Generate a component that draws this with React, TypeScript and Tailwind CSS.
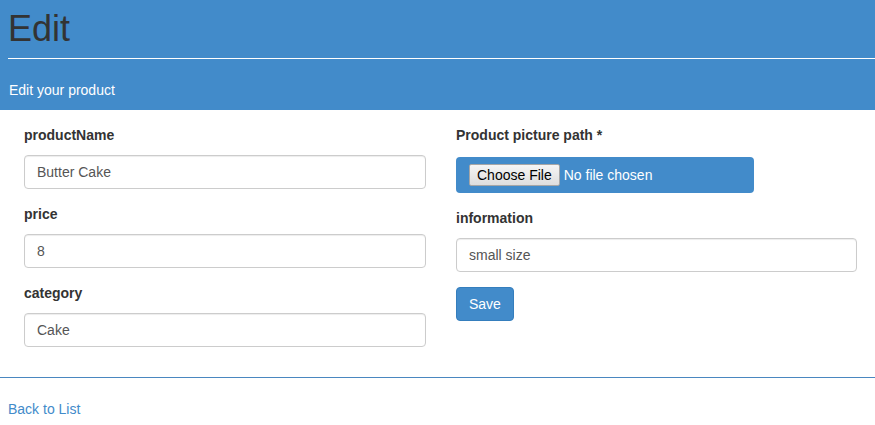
import React from "react";

const font = { fontFamily: '"Liberation Sans", Arial, sans-serif' };

function Field({ label, value, last }: { label: string; value: string; last?: boolean }) {
  return (
    <div className={last ? "" : "mb-[15px]"}>
      <div className="text-[14px] leading-[20px] font-bold text-[#333] mb-[10px]">{label}</div>
      <div className="h-[34px] border border-[#ccc] rounded-[4px] shadow-[inset_0_1px_1px_rgba(0,0,0,0.075)] px-[12px] flex items-center text-[14px] text-[#555] bg-white">
        {value}
      </div>
    </div>
  );
}

export default function App() {
  return (
    <div className="w-[875px] h-[425px] bg-white overflow-hidden" style={font}>
      <div className="bg-[#428bca] h-[110px]">
        <div className="pl-[8px]">
          <h1 className="text-[36px] leading-[40px] pt-[9px] pb-[9px] text-[#333] font-normal">Edit</h1>
          <div className="h-px bg-white" />
        </div>
        <div className="pl-[9px] pt-[21px] text-[14px] leading-[20px] text-white">Edit your product</div>
      </div>

      <div className="grid grid-cols-[402px_401px] gap-x-[30px] pl-[24px] pt-[15px]">
        <div>
          <Field label="productName" value="Butter Cake" />
          <Field label="price" value="8" />
          <Field label="category" value="Cake" last />
        </div>
        <div>
          <div className="text-[14px] leading-[20px] font-bold text-[#333]">Product picture path *</div>
          <div className="mt-[12px] w-[298px] h-[36px] bg-[#428bca] rounded-[4px] flex items-center pl-[13px]">
            <span className="h-[22px] flex items-center px-[7px] border border-[#a6a6a6] bg-gradient-to-b from-[#f5f5f5] to-[#dedede] rounded-[2px] text-[14px] text-black">
              Choose File
            </span>
            <span className="ml-[4px] text-[14px] text-white">No file chosen</span>
          </div>
          <div className="mt-[15px] text-[14px] leading-[20px] font-bold text-[#333] mb-[10px]">information</div>
          <div className="h-[34px] border border-[#ccc] rounded-[4px] shadow-[inset_0_1px_1px_rgba(0,0,0,0.075)] px-[12px] flex items-center text-[14px] text-[#555] bg-white">
            small size
          </div>
          <div className="mt-[15px]">
            <span className="inline-flex items-center h-[34px] px-[12px] bg-[#428bca] border border-[#357ebd] rounded-[4px] text-[14px] text-white">
              Save
            </span>
          </div>
        </div>
      </div>

      <div className="mt-[30px] h-px bg-[#4a87c0]" />
      <div className="pl-[8px] pt-[21px] text-[14px] leading-[20px] text-[#428bca]">Back to List</div>
    </div>
  );
}
